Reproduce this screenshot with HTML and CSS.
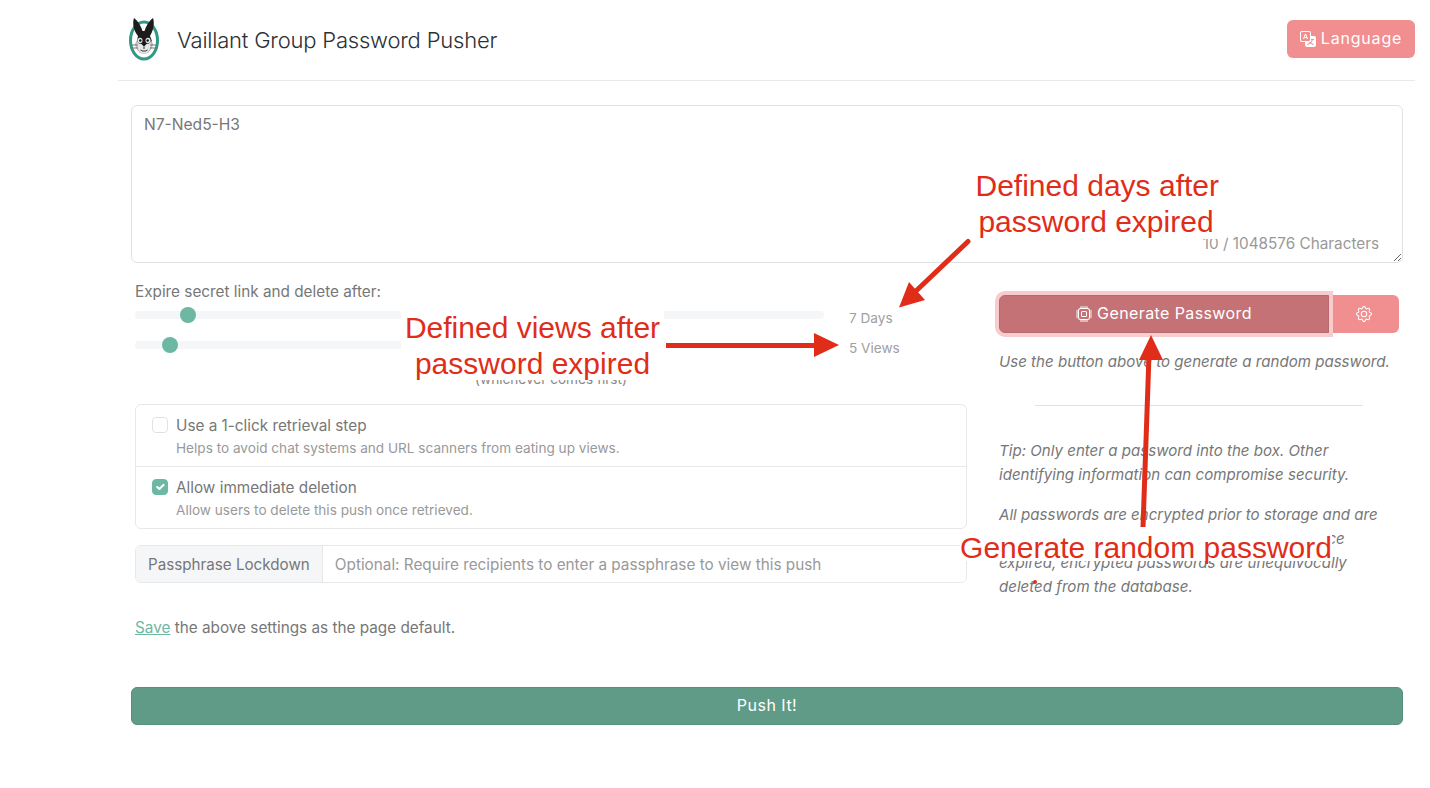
FILE: index.html
```html
<!DOCTYPE html>
<html lang="en">
<head>
<meta charset="utf-8">
<title>Vaillant Group Password Pusher</title>
<link rel="stylesheet" href="styles.css">
</head>
<body>
<div class="page">
  <header class="topbar">
    <div class="brand">
      <svg class="logo" viewBox="0 0 34 44" width="34" height="44" aria-hidden="true">
        <ellipse cx="17" cy="22.500" rx="13.500" ry="18.500" fill="#fff" stroke="#2f9a83" stroke-width="3"/>
        <path d="M7 0 C5 6 7 13 11 18 L10 23 L12 31 L22 31 L25 23 L23 18 C26 13 28 6 26 0 C22 3 19 8 17.500 13 L15.500 13 C14 8 11 3 7 0Z" fill="#1c1c1c"/>
        <path d="M10 22 L8 26 C9 32 13 36 17 36 C21 36 25 32 26 26 L24 22 C23 27 21 30 17 30 C13 30 11 27 10 22Z" fill="#bbb"/>
        <path d="M10 24 C10 31 13 35.500 17 35.500 C21 35.500 24 31 24 24 C22 27 12 27 10 24Z" fill="#e6e6e6"/>
        <ellipse cx="13" cy="22.500" rx="2.500" ry="2.800" fill="#e6e6e6"/>
        <ellipse cx="21" cy="22.500" rx="2.500" ry="2.800" fill="#e6e6e6"/>
        <circle cx="13.300" cy="22.500" r="1.200" fill="#111"/>
        <circle cx="20.700" cy="22.500" r="1.200" fill="#111"/>
        <path d="M14.500 26 H19.500 L17 28.500Z" fill="#111"/>
        <path d="M17 28.500 V31 M13.500 32 C15 33.500 19 33.500 20.500 32" stroke="#222" stroke-width=".9" fill="none"/>
        <path d="M3.500 27 H11 M4 30 H11 M23 27 H30.500 M23 30 H30" stroke="#777" stroke-width="1.100"/>
      </svg>
      <span class="brand-name">Vaillant Group Password Pusher</span>
    </div>
    <button class="btn btn-lang" type="button">
      <svg class="icon" viewBox="0 0 16 16" width="16" height="16" aria-hidden="true" fill="currentColor">
        <path d="M4.545 6.714 4.110 8H3l1.862-5h1.284L8 8H6.833l-.435-1.286H4.545zm1.634-.736L5.500 3.956h-.049l-.679 2.022H6.180z"/>
        <path d="M0 2a2 2 0 0 1 2-2h7a2 2 0 0 1 2 2v3h3a2 2 0 0 1 2 2v7a2 2 0 0 1-2 2H7a2 2 0 0 1-2-2v-3H2a2 2 0 0 1-2-2V2zm2-1a1 1 0 0 0-1 1v7a1 1 0 0 0 1 1h7a1 1 0 0 0 1-1V2a1 1 0 0 0-1-1H2zm7.138 9.995c.193.301.402.583.63.846-.748.575-1.673 1.001-2.768 1.292.178.217.451.635.555.867 1.125-.359 2.080-.844 2.886-1.494.777.665 1.739 1.165 2.930 1.472.133-.254.414-.673.629-.890-1.125-.253-2.057-.694-2.820-1.284.681-.747 1.222-1.651 1.621-2.757H14V8h-3v1.047h.765c-.318.844-.740 1.546-1.272 2.130a6.066 6.066 0 0 1-.415-.492 1.988 1.988 0 0 1-.940.310z"/>
      </svg>
      <span class="btn-text">Language</span>
    </button>
  </header>

  <main class="content">
    <div class="secret-box">
      <textarea class="secret" spellcheck="false">N7-Ned5-H3</textarea>
      <span class="counter">10 / 1048576 Characters</span>
    </div>

    <div class="columns">
      <section class="left">
        <p class="expire-label">Expire secret link and delete after:</p>
        <div class="slider-row">
          <input class="range" type="range" min="1" max="90" value="7" aria-label="Days">
          <span class="slider-value">7 Days</span>
        </div>
        <div class="slider-row">
          <input class="range" type="range" min="1" max="101" value="5" aria-label="Views">
          <span class="slider-value">5 Views</span>
        </div>
        <p class="whichever">(whichever comes first)</p>

        <div class="options">
          <label class="option">
            <input class="check" type="checkbox">
            <span class="option-text">
              <span class="option-title">Use a 1-click retrieval step</span>
              <span class="option-help">Helps to avoid chat systems and URL scanners from eating up views.</span>
            </span>
          </label>
          <label class="option">
            <input class="check" type="checkbox" checked>
            <span class="option-text">
              <span class="option-title">Allow immediate deletion</span>
              <span class="option-help">Allow users to delete this push once retrieved.</span>
            </span>
          </label>
        </div>

        <div class="passphrase">
          <span class="passphrase-label">Passphrase Lockdown</span>
          <input class="passphrase-input" type="text" placeholder="Optional: Require recipients to enter a passphrase to view this push">
        </div>

        <p class="save-line"><a class="save-link" href="#">Save</a> the above settings as the page default.</p>
      </section>

      <aside class="right">
        <div class="gen-group">
          <button class="btn btn-gen" type="button">
            <svg class="icon" viewBox="0 0 16 16" width="16" height="16" aria-hidden="true" fill="currentColor">
              <path d="M5 0a.5.5 0 0 1 .5.5V2h1V.5a.5.5 0 0 1 1 0V2h1V.5a.5.5 0 0 1 1 0V2h1V.5a.5.5 0 0 1 1 0V2A2.500 2.500 0 0 1 14 4.500h1.500a.5.5 0 0 1 0 1H14v1h1.500a.5.5 0 0 1 0 1H14v1h1.500a.5.5 0 0 1 0 1H14v1h1.500a.5.5 0 0 1 0 1H14a2.500 2.500 0 0 1-2.500 2.500v1.500a.5.5 0 0 1-1 0V14h-1v1.500a.5.5 0 0 1-1 0V14h-1v1.500a.5.5 0 0 1-1 0V14h-1v1.500a.5.5 0 0 1-1 0V14A2.500 2.500 0 0 1 2 11.500H.5a.5.5 0 0 1 0-1H2v-1H.5a.5.5 0 0 1 0-1H2v-1H.5a.5.5 0 0 1 0-1H2v-1H.5a.5.5 0 0 1 0-1H2A2.500 2.500 0 0 1 4.500 2V.5A.5.5 0 0 1 5 0zm-.5 3A1.500 1.500 0 0 0 3 4.500v7A1.500 1.500 0 0 0 4.500 13h7a1.500 1.500 0 0 0 1.500-1.500v-7A1.500 1.500 0 0 0 11.500 3h-7zM5 6.500A1.500 1.500 0 0 1 6.500 5h3A1.500 1.500 0 0 1 11 6.500v3A1.500 1.500 0 0 1 9.500 11h-3A1.500 1.500 0 0 1 5 9.500v-3zM6.500 6a.5.5 0 0 0-.5.5v3a.5.5 0 0 0 .5.5h3a.5.5 0 0 0 .5-.5v-3a.5.5 0 0 0-.5-.5h-3z"/>
            </svg>
            <span class="btn-text">Generate Password</span>
          </button>
          <button class="btn btn-cfg" type="button" aria-label="Settings">
            <svg class="icon" viewBox="0 0 16 16" width="16" height="16" aria-hidden="true" fill="currentColor">
              <path d="M8 4.754a3.246 3.246 0 1 0 0 6.492 3.246 3.246 0 0 0 0-6.492zM5.754 8a2.246 2.246 0 1 1 4.492 0 2.246 2.246 0 0 1-4.492 0z"/>
              <path d="M9.796 1.343c-.527-1.790-3.065-1.790-3.592 0l-.094.319a.873.873 0 0 1-1.255.520l-.292-.160c-1.640-.892-3.433.902-2.540 2.541l.159.292a.873.873 0 0 1-.520 1.255l-.319.094c-1.790.527-1.790 3.065 0 3.592l.319.094a.873.873 0 0 1 .520 1.255l-.160.292c-.892 1.640.901 3.434 2.541 2.540l.292-.159a.873.873 0 0 1 1.255.520l.094.319c.527 1.790 3.065 1.790 3.592 0l.094-.319a.873.873 0 0 1 1.255-.520l.292.160c1.640.893 3.434-.902 2.540-2.541l-.159-.292a.873.873 0 0 1 .520-1.255l.319-.094c1.790-.527 1.790-3.065 0-3.592l-.319-.094a.873.873 0 0 1-.520-1.255l.160-.292c.893-1.640-.902-3.433-2.541-2.540l-.292.159a.873.873 0 0 1-1.255-.520l-.094-.319zm-2.633.283c.246-.835 1.428-.835 1.674 0l.094.319a1.873 1.873 0 0 0 2.693 1.115l.291-.160c.764-.415 1.600.420 1.184 1.185l-.159.292a1.873 1.873 0 0 0 1.116 2.692l.318.094c.835.246.835 1.428 0 1.674l-.319.094a1.873 1.873 0 0 0-1.115 2.693l.160.291c.415.764-.420 1.600-1.185 1.184l-.291-.159a1.873 1.873 0 0 0-2.693 1.116l-.094.318c-.246.835-1.428.835-1.674 0l-.094-.319a1.873 1.873 0 0 0-2.692-1.115l-.292.160c-.764.415-1.600-.420-1.184-1.185l.159-.291A1.873 1.873 0 0 0 1.945 8.930l-.319-.094c-.835-.246-.835-1.428 0-1.674l.319-.094A1.873 1.873 0 0 0 3.060 4.377l-.160-.292c-.415-.764.420-1.600 1.185-1.184l.292.159a1.873 1.873 0 0 0 2.692-1.115l.094-.319z"/>
            </svg>
          </button>
        </div>
        <p class="note note-first">Use the button above to generate a random password.</p>
        <hr class="divider">
        <p class="note note-tip">Tip: Only enter a password into the box. Other identifying information can compromise security.</p>
        <p class="note">All passwords are encrypted prior to storage and are available to only those with the secret link. Once expired, encrypted passwords are unequivocally deleted from the database.</p>
      </aside>
    </div>

    <button class="push" type="button">Push It!</button>
  </main>
</div>

<div class="annotations">
  <svg class="arrows" width="1430" height="788" viewBox="0 0 1430 788" aria-hidden="true">
    <path d="M968 241.500 L916 291" stroke="#e02d1a" stroke-width="5" stroke-linecap="round" fill="none"/>
    <polygon points="899,307.500 909,282 925,300" fill="#e02d1a"/>
    <rect x="665" y="340" width="152" height="10" fill="#fff"/>
    <path d="M666 345.500 H816" stroke="#e02d1a" stroke-width="5" fill="none"/>
    <polygon points="839,345 814,333 814,357" fill="#e02d1a"/>
    <path d="M1143 527 L1149 355" stroke="#e02d1a" stroke-width="5" fill="none"/>
    <polygon points="1151,335 1139,360 1163,360" fill="#e02d1a"/>
    <circle cx="1035" cy="582" r="2" fill="#e02d1a"/>
  </svg>
  <div class="note-label label-days">Defined days after<br>password expired</div>
  <div class="note-label label-views">Defined views after<br>password expired</div>
  <div class="note-label label-gen">Generate random password</div>
</div>
</body>
</html>
```

FILE: styles.css
```css
* { box-sizing: border-box; }
html, body { margin: 0; padding: 0; }
body {
  background: #fff;
  color: #777;
  font-family: Inter, "Liberation Sans", sans-serif;
  font-size: 15.300px;
  line-height: 24px;
  position: relative;
  height: 788px;
  overflow: hidden;
}
p { margin: 0; }

.page { width: 1415px; padding-left: 118px; }

.topbar {
  height: 81px;
  border-bottom: 1px solid #e9e9e9;
  display: flex;
  align-items: center;
  justify-content: space-between;
  padding: 0 0 2px 9px;
}
.brand { display: flex; align-items: center; gap: 16px; margin-top: 2px; }
.logo { display: block; }
.brand-name { color: #2b3035; font-size: 22px; font-weight: 300; letter-spacing: -0.2px; }

.btn {
  border: 0;
  color: #fff;
  background: #f08e90;
  font-family: Inter, "Open Sans", sans-serif;
  font-size: 16px;
  display: flex;
  align-items: center;
  justify-content: center;
  gap: 5px;
  cursor: pointer;
}
.btn-text { padding-bottom: 2px; }
.icon { display: block; flex: none; }
.btn-lang { width: 128px; height: 38px; border-radius: 6px; letter-spacing: .8px; }

.content { padding: 24px 12px 0 13px; }
.secret-box { position: relative; height: 158px; }
.secret {
  display: block;
  width: 100%;
  height: 158px;
  border: 1px solid #dee2e6;
  border-radius: 6px;
  padding: 7px 12px;
  font: inherit;
  font-size: 15.600px;
  color: #777;
  outline: 0;
  resize: vertical;
}
.counter {
  position: absolute;
  right: 24px;
  bottom: 7px;
  color: #999;
}

.columns {
  display: grid;
  grid-template-columns: 832px 400px;
  column-gap: 32px;
  padding-left: 4px;
  margin-top: 16px;
}
.expire-label { height: 21px; padding-top: 1px; }
.slider-row {
  display: flex;
  align-items: center;
  height: 30px;
  gap: 25px;
}
.range {
  -webkit-appearance: none;
  appearance: none;
  width: 689px;
  height: 8px;
  margin: 0;
  border-radius: 4px;
  background: #f4f6f8;
  outline: 0;
}
.range::-webkit-slider-thumb {
  -webkit-appearance: none;
  appearance: none;
  width: 16px;
  height: 16px;
  border-radius: 50%;
  background: #6db8a3;
}
.slider-value { color: #a0a0a0; font-size: 13.600px; white-space: nowrap; margin-top: 6px; }
.whichever { text-align: center; color: #888; font-size: 13.600px; line-height: 18px; height: 18px; width: 832px; margin-top: 10px; }

.options {
  width: 832px;
  margin-top: 16px;
  border: 1px solid #e6e8eb;
  border-radius: 6px;
}
.option {
  display: flex;
  gap: 8px;
  padding: 9px 16px 0;
  height: 61px;
}
.option + .option { border-top: 1px solid #e6e8eb; height: 62px; }
.check {
  -webkit-appearance: none;
  appearance: none;
  flex: none;
  width: 16px;
  height: 16px;
  margin: 3px 0 0;
  border: 1px solid #dee2e6;
  border-radius: 4px;
  background: #fff;
}
.check:checked {
  border-color: #6db8a3;
  background: #6db8a3 url("data:image/svg+xml,%3Csvg xmlns='http://www.w3.org/2000/svg' viewBox='0 0 20 20'%3E%3Cpath fill='none' stroke='%23fff' stroke-linecap='round' stroke-linejoin='round' stroke-width='3' d='m6 10 3 3 6-6'/%3E%3C/svg%3E") center/100% no-repeat;
}
.option-text { display: flex; flex-direction: column; }
.option-title { line-height: 24px; }
.option-help { color: #999; font-size: 13.600px; line-height: 22px; margin-top: -1px; }

.passphrase {
  width: 832px;
  height: 38px;
  margin-top: 16px;
  display: flex;
  border: 1px solid #e6e8eb;
  border-radius: 6px;
  overflow: hidden;
}
.passphrase-label {
  padding: 0 12px;
  background: #f5f6f8;
  border-right: 1px solid #e6e8eb;
  font-size: 15.200px;
  line-height: 38px;
  white-space: nowrap;
}
.passphrase-input {
  flex: 1;
  border: 0;
  outline: 0;
  padding: 2px 12px 0;
  font: inherit;
  color: #777;
}
.passphrase-input::placeholder { color: #999; opacity: 1; }
.save-line { margin-top: 33px; }
.save-link { color: #6db8a3; }

.gen-group { display: flex; height: 38px; margin-top: 16px; width: 400px; }
.btn-gen {
  width: 330px;
  height: 38px;
  border: 1px solid #b8696d;
  border-radius: 6px 0 0 6px;
  background: #c47276;
  box-shadow: 0 0 0 4px #f8cccc;
  clip-path: inset(-4px -4px -4px -4px round 6px 0 0 6px);
  position: relative;
  letter-spacing: .4px;
}
.btn-cfg { flex: 1; border-radius: 0 6px 6px 0; }
.note { font-style: italic; color: #777; margin-top: 16px; font-size: 15.100px; }
.note-first { margin-top: 17px; }
.divider {
  width: 328px;
  border: 0;
  border-top: 1px solid #dee2e6;
  margin: 31px 0 0 36px;
}
.note-tip { margin-top: 33px; }

.push {
  display: block;
  width: 100%;
  height: 38px;
  margin-top: 47px;
  padding: 0 0 2px;
  border: 1px solid #55907c;
  border-radius: 6px;
  background: #5f9b87;
  color: #fff;
  font-family: Inter, "Open Sans", sans-serif;
  font-size: 16px;
  letter-spacing: .5px;
}

.annotations { position: absolute; inset: 0; pointer-events: none; }
.arrows { position: absolute; left: 0; top: 0; display: block; }
.note-label {
  position: absolute;
  background: #fff;
  color: #e02d1a;
  font-family: "Liberation Sans", Arial, sans-serif;
  font-size: 30px;
  line-height: 36px;
  text-align: center;
  white-space: nowrap;
}
.label-days { left: 975.500px; top: 168px; width: 241px; height: 71px; }
.label-views { left: 401px; top: 310px; width: 263px; height: 70px; }
.label-gen { left: 960px; top: 530px; width: 372px; height: 31px; line-height: 36px; }
```
